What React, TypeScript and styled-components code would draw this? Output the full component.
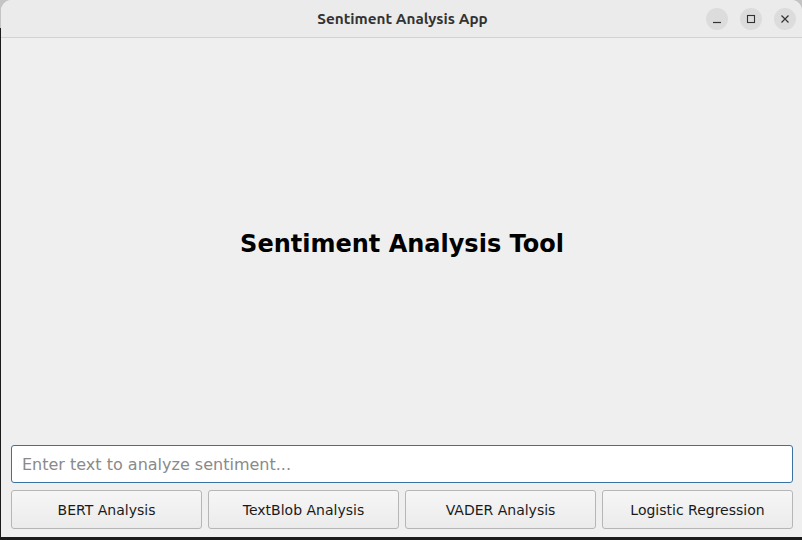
import React from 'react';
import styled, { createGlobalStyle } from 'styled-components';

const GlobalStyle = createGlobalStyle`
  html, body {
    margin: 0;
    padding: 0;
    width: 802px;
    height: 540px;
    overflow: hidden;
  }
  * { box-sizing: border-box; }
`;

const Screen = styled.div`
  width: 802px;
  height: 540px;
  display: flex;
  padding: 0 0 3px 1px;
  background: linear-gradient(to bottom, #c4c4c4 0 28px, #1b1b1b 28px);
`;

const Window = styled.div`
  flex: 1;
  display: flex;
  flex-direction: column;
  background: #efefef;
  border-radius: 11px 11px 0 0;
  overflow: hidden;
  font-family: 'DejaVu Sans', sans-serif;
`;

const TitleBar = styled.div`
  height: 38px;
  flex: none;
  display: flex;
  align-items: center;
  justify-content: center;
  position: relative;
  background: #ebebeb;
  border-bottom: 1px solid #d2d2d2;
`;

const Title = styled.div`
  font-family: 'Ubuntu', 'DejaVu Sans', sans-serif;
  font-weight: bold;
  font-size: 15.3px;
  color: #333;
  padding-left: 2px;
`;

const Controls = styled.div`
  position: absolute;
  right: 6px;
  top: 8px;
  display: flex;
  gap: 12px;
`;

const CtrlButton = styled.div`
  width: 22px;
  height: 22px;
  border-radius: 50%;
  background: #dcdcdc;
  display: flex;
  align-items: center;
  justify-content: center;
`;

const Content = styled.div`
  flex: 1;
  display: flex;
  flex-direction: column;
  padding: 0 9px 8px 10px;
`;

const Heading = styled.div`
  flex: 1;
  display: flex;
  align-items: center;
  justify-content: center;
  font-weight: bold;
  font-size: 24px;
  color: #000;
  padding-top: 4px;
`;

const Input = styled.input`
  height: 38px;
  margin-bottom: 7px;
  border: 1px solid #3a72a3;
  border-radius: 3px;
  background: #fff;
  padding: 0 10px;
  font-family: 'DejaVu Sans', sans-serif;
  font-size: 16px;
  color: #000;
  outline: none;
  &::placeholder { color: #8a8a8a; }
`;

const ButtonRow = styled.div`
  display: grid;
  grid-template-columns: repeat(4, 1fr);
  gap: 6px;
`;

const ActionButton = styled.button`
  height: 39px;
  border: 1px solid #b6b6b6;
  border-radius: 3px;
  background: linear-gradient(to bottom, #f6f6f6, #ebebeb);
  font-family: 'DejaVu Sans', sans-serif;
  font-size: 14px;
  color: #1a1a1a;
  padding: 0;
`;

const labels = ['BERT Analysis', 'TextBlob Analysis', 'VADER Analysis', 'Logistic Regression'];

export default function App() {
  return (
    <>
      <GlobalStyle />
      <Screen>
        <Window>
          <TitleBar>
            <Title>Sentiment Analysis App</Title>
            <Controls>
              <CtrlButton>
                <svg width="10" height="10" viewBox="0 0 10 10">
                  <path d="M1 8.5h8" stroke="#333" strokeWidth="1.2" />
                </svg>
              </CtrlButton>
              <CtrlButton>
                <svg width="10" height="10" viewBox="0 0 10 10">
                  <rect x="1.5" y="1.5" width="7" height="7" fill="none" stroke="#333" strokeWidth="1.1" />
                </svg>
              </CtrlButton>
              <CtrlButton>
                <svg width="10" height="10" viewBox="0 0 10 10">
                  <path d="M1.5 1.5l7 7M8.5 1.5l-7 7" stroke="#333" strokeWidth="1.2" />
                </svg>
              </CtrlButton>
            </Controls>
          </TitleBar>
          <Content>
            <Heading>Sentiment Analysis Tool</Heading>
            <Input placeholder="Enter text to analyze sentiment..." />
            <ButtonRow>
              {labels.map((l) => (
                <ActionButton key={l}>{l}</ActionButton>
              ))}
            </ButtonRow>
          </Content>
        </Window>
      </Screen>
    </>
  );
}
